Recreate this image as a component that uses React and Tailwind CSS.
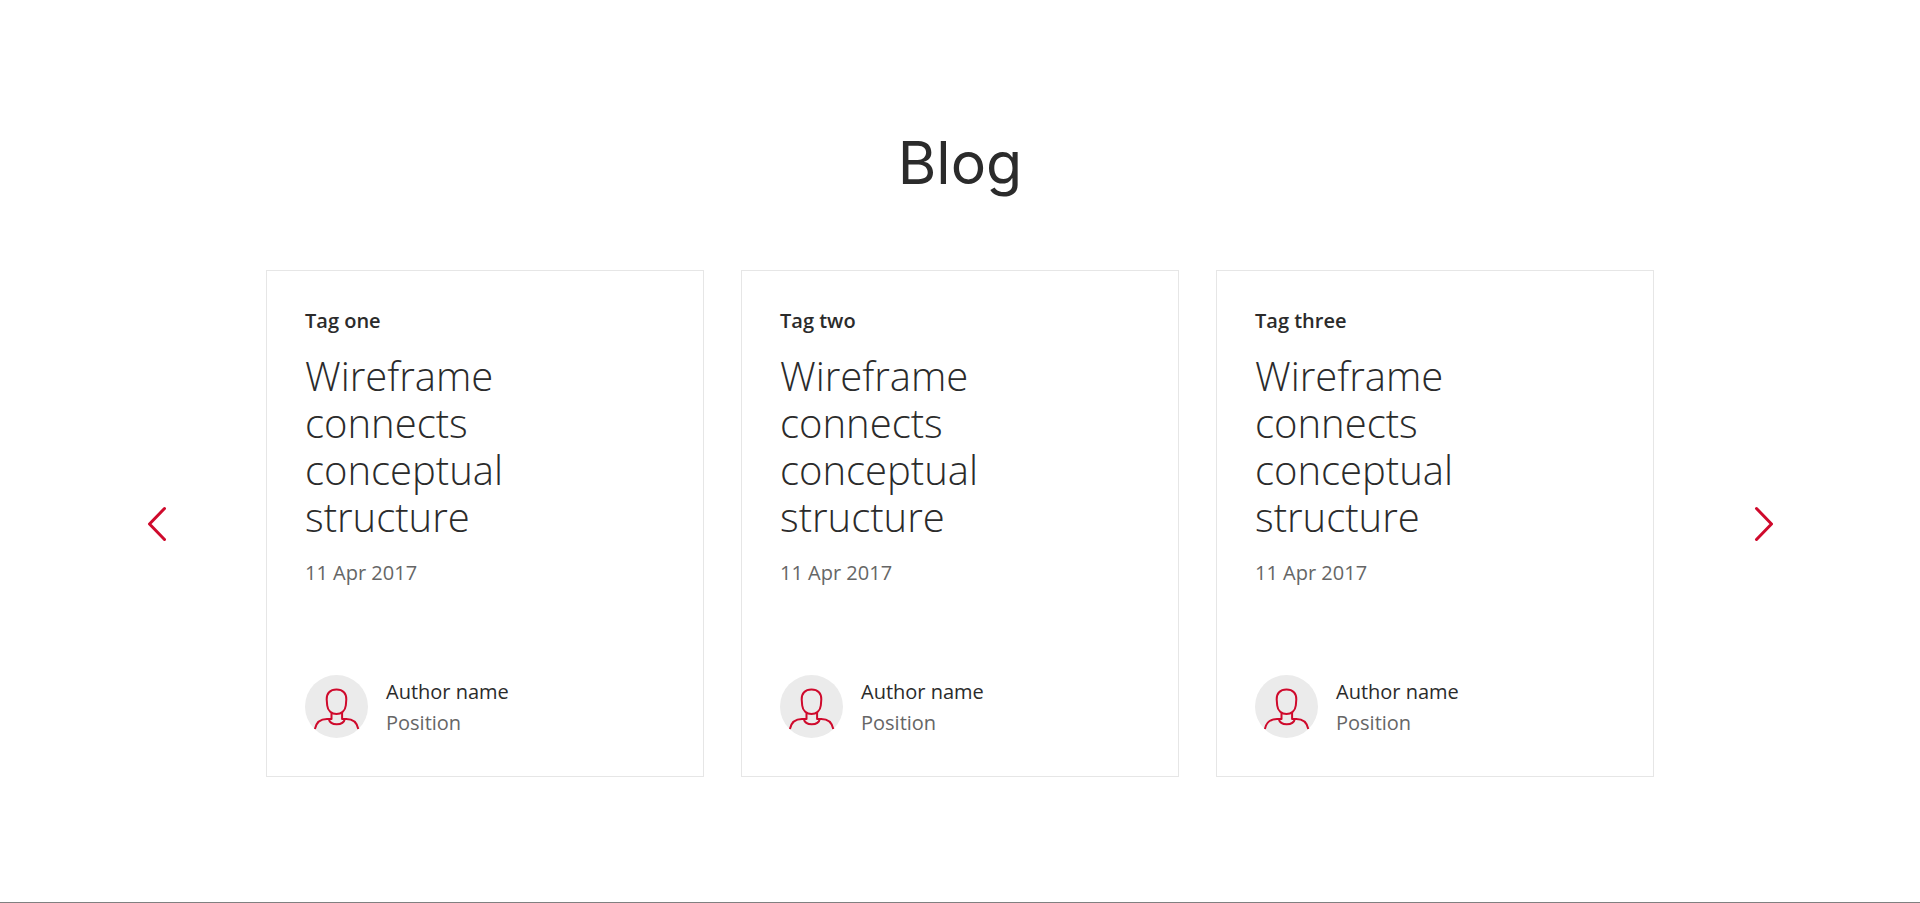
const posts = [
  { tag: "Tag one" },
  { tag: "Tag two" },
  { tag: "Tag three" },
].map((post) => ({
  ...post,
  title: "Wireframe connects conceptual structure",
  date: "11 Apr 2017",
  author: "Author name",
  position: "Position",
}));

function Avatar() {
  return (
    <svg viewBox="0 0 63 63" className="size-[63px] shrink-0" fill="none" aria-hidden="true">
      <circle cx="31.5" cy="31.5" r="31.5" fill="#ebebeb" />
      <g stroke="#cf0a2c" strokeWidth="2" strokeLinejoin="round">
        <path d="M31.500 14.600C25 14.600 21.500 18.300 21.700 24.500L22.200 30.500C22.700 35.600 26.600 39 31.500 39S40.300 35.600 40.800 30.500L41.300 24.500C41.500 18.300 38 14.600 31.500 14.600Z" />
        <path d="M26.500 38V44H22C15.500 44 11.200 47.500 9.900 54M37.100 38V44H41.300C48 44 52 47.500 53.300 54" />
        <path d="M23.800 44C24.500 47.400 27.500 49.200 31.800 49.200S39.100 47.400 39.800 44" />
      </g>
    </svg>
  );
}

function Arrow({ label, d }) {
  return (
    <button type="button" aria-label={label} className="shrink-0 cursor-pointer">
      <svg viewBox="0 0 19 36" className="h-9 w-[19px]" fill="none" stroke="#cf0a2c" strokeWidth="3" strokeLinecap="round" strokeLinejoin="round">
        <path d={d} />
      </svg>
    </button>
  );
}

function Card({ post }) {
  return (
    <article className="flex flex-col border border-[#e6e6e6] px-[38px] pt-9 pb-[38px]">
      <p className="text-xl leading-7 font-semibold">{post.tag}</p>
      <h2 className="mt-[17px] max-w-[260px] text-[40px] leading-[47px] font-light">{post.title}</h2>
      <p className="mt-[17px] text-xl leading-[31px] text-[#666]">{post.date}</p>
      <div className="mt-auto flex items-center gap-[18px] pt-[87px]">
        <Avatar />
        <div className="text-xl leading-[31px]">
          <p>{post.author}</p>
          <p className="text-[#666]">{post.position}</p>
        </div>
      </div>
    </article>
  );
}

export default function App() {
  return (
    <section className="min-h-screen border-b border-[#808080] bg-white px-[147px] pt-[126px] pb-[124px] font-['Open_Sans',sans-serif] text-[#2b2b2b]">
      <h1 className="text-center font-['Inter',sans-serif] text-[59px] leading-[74px] font-normal">Blog</h1>
      <div className="mt-[70px] flex items-center justify-between gap-[100px]">
        <Arrow label="Previous posts" d="M17.500 2.500 L2.500 18 L17.500 33.500" />
        <div className="grid flex-1 grid-cols-3 gap-[37px]">
          {posts.map((post) => (
            <Card key={post.tag} post={post} />
          ))}
        </div>
        <Arrow label="Next posts" d="M2.500 2.500 L17.500 18 L2.500 33.500" />
      </div>
    </section>
  );
}
